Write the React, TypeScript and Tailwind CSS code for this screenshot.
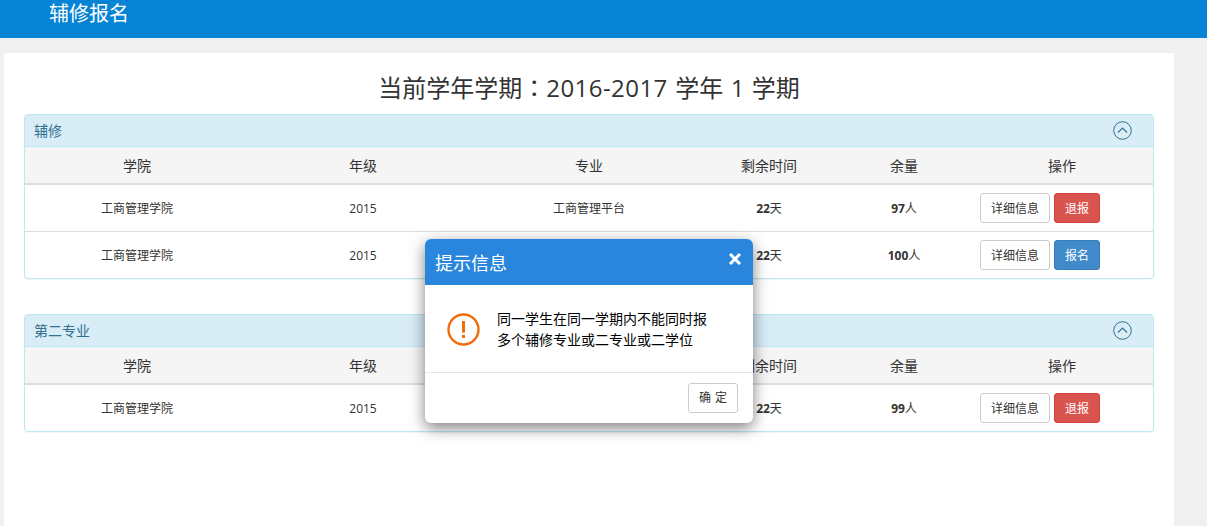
import React from "react";

type Row = { college: string; year: string; major: string; time: string; left: string; blue?: boolean };

function Chevron() {
  return (
    <svg width="19" height="19" viewBox="0 0 19 19" fill="none" stroke="#31708f" strokeWidth="1">
      <circle cx="9.5" cy="9.5" r="8.8" />
      <path d="M5 11.5 L9.5 7 L14 11.5" strokeWidth="1.1" />
    </svg>
  );
}

function Panel({ title, rows }: { title: string; rows: Row[] }) {
  return (
    <section className="w-[1130px] rounded border border-[#bce8f1] bg-white overflow-hidden shadow-[0_1px_1px_rgba(0,0,0,0.05)]">
      <div className="h-[32px] bg-[#d9edf7] border-b border-[#bce8f1] flex items-center justify-between pl-[9px] pr-[21px] text-[14px] text-[#31708f]">
        <span>{title}</span>
        <Chevron />
      </div>
      <table className="w-[1128px] table-fixed border-collapse text-[12px] text-[#333]">
        <colgroup>
          <col className="w-[224px]" />
          <col className="w-[228px]" />
          <col className="w-[224px]" />
          <col className="w-[136px]" />
          <col className="w-[134px]" />
          <col className="w-[182px]" />
        </colgroup>
        <thead>
          <tr className="h-[37px] bg-[#f5f5f5] border-b-2 border-[#ddd] text-[14px]">
            {["学院", "年级", "专业", "剩余时间", "余量", "操作"].map((h) => (
              <th key={h} className="font-normal text-center">{h}</th>
            ))}
          </tr>
        </thead>
        <tbody>
          {rows.map((r, i) => (
            <tr key={i} className={i > 0 ? "h-[47px] border-t border-[#ddd]" : "h-[47px]"}>
              <td className="text-center pt-[2px]">{r.college}</td>
              <td className="text-center pt-[2px]">{r.year}</td>
              <td className="text-center pt-[2px]">{r.major}</td>
              <td className="text-center pt-[2px]"><b>{r.time}</b>天</td>
              <td className="text-center pt-[2px]"><b>{r.left}</b>人</td>
              <td className="pl-[9px]">
                <div className="flex gap-[4px]">
                  <button className="w-[70px] h-[30px] pt-[2px] rounded-[3px] border border-[#ccc] bg-white text-[#333]">详细信息</button>
                  {r.blue ? (
                    <button className="w-[46px] h-[30px] pt-[2px] rounded-[3px] border border-[#357ebd] bg-[#428bca] text-white">报名</button>
                  ) : (
                    <button className="w-[46px] h-[30px] pt-[2px] rounded-[3px] border border-[#d43f3a] bg-[#d9534f] text-white">退报</button>
                  )}
                </div>
              </td>
            </tr>
          ))}
        </tbody>
      </table>
    </section>
  );
}

export default function App() {
  return (
    <div className="relative h-[526px] w-[1207px] overflow-hidden bg-[#f0f0f0] font-['Open_Sans','Noto_Sans_CJK_SC',sans-serif] text-[#333]">
      <header className="h-[38px] bg-[#0683d4] pl-[49px] text-[20px] leading-[28px] text-white">辅修报名</header>
      <main className="mt-[15px] ml-[4px] w-[1170px] h-[473px] bg-white pl-[20px] pt-[18px]">
        <h1 className="h-[43px] w-[1170px] -ml-[20px] text-center text-[24px] leading-[34px] text-[#333] [word-spacing:1.2px] font-['Open_Sans','Noto_Sans_CJK_TC',sans-serif]">
          当前学年学期：<span className="tracking-[0.45px]">2016-2017</span> 学年 1 学期
        </h1>
        <div className="flex flex-col gap-[35px]">
          <Panel
            title="辅修"
            rows={[
              { college: "工商管理学院", year: "2015", major: "工商管理平台", time: "22", left: "97" },
              { college: "工商管理学院", year: "2015", major: "", time: "22", left: "100", blue: true },
            ]}
          />
          <Panel
            title="第二专业"
            rows={[{ college: "工商管理学院", year: "2015", major: "", time: "22", left: "99" }]}
          />
        </div>
      </main>
      <div className="absolute left-[425px] top-[239px] w-[328px] h-[184px] rounded-[6px] bg-white shadow-[0_5px_15px_rgba(0,0,0,0.5)] overflow-hidden flex flex-col">
        <div className="h-[46px] shrink-0 bg-[#2a86dc] flex items-start justify-between pl-[10px] pr-[12px] text-white">
          <span className="text-[18px] leading-[48px]">提示信息</span>
          <svg className="mt-[14px]" width="12" height="12" viewBox="0 0 12 12" stroke="#fff" strokeWidth="3"><path d="M1 1 L11 11 M11 1 L1 11" /></svg>
        </div>
        <div className="h-[88px] shrink-0 flex items-center pl-[22px] border-b border-[#e5e5e5]">
          <svg className="mt-[1px]" width="33" height="33" viewBox="0 0 33 33" fill="none">
            <circle cx="16.5" cy="16.5" r="15" stroke="#f26c0d" strokeWidth="2.4" />
            <path d="M16.5 8 V19.5" stroke="#f26c0d" strokeWidth="3" />
            <rect x="15" y="22" width="3" height="3" fill="#f26c0d" />
          </svg>
          <p className="ml-[17px] mt-[1px] text-[14px] leading-[21px] text-black">同一学生在同一学期内不能同时报<br />多个辅修专业或二专业或二学位</p>
        </div>
        <div className="flex-1 flex items-center justify-end pr-[15px]">
          <button className="w-[50px] h-[30px] rounded-[3px] border border-[#ccc] bg-white text-[12px] text-[#333] [word-spacing:1px]">确 定</button>
        </div>
      </div>
    </div>
  );
}
